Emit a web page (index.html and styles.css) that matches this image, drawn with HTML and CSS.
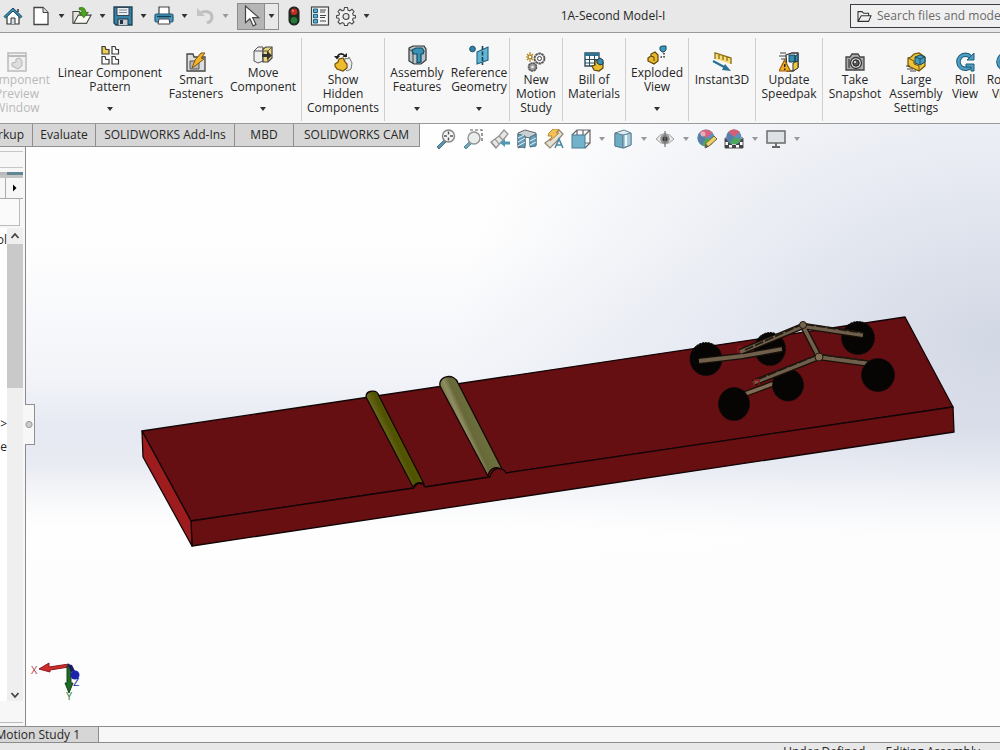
FILE: index.html
```html
<!DOCTYPE html>
<html lang="en">
<head>
<meta charset="utf-8">
<title>1A-Second Model-I</title>
<link rel="stylesheet" href="styles.css">
</head>
<body>
<div class="app">
  <header class="titlebar">
    <div class="quick">
      <button class="tool home" aria-label="Home"><svg viewBox="0 0 20 20"><path d="M4 10v8h12v-8l-6-6z" fill="#fff" stroke="#333" stroke-width="1.2"/><path d="M1 10.500 10 2l9 8.500-1.500 1.500L10 5l-7.500 7z" fill="#3f8fb5" stroke="#174a63"/><path d="M8 18v-6h4v6" fill="#cfdde4" stroke="#333"/><path d="M15 3v3" stroke="#333" stroke-width="1.500"/></svg></button>
      <button class="tool" aria-label="New"><svg viewBox="0 0 20 20"><path d="M3 1.500h9l5 5v12H3z" fill="#fff" stroke="#444" stroke-width="1.300"/><path d="M12 1.500v5h5" fill="#ddd" stroke="#444"/></svg></button><button class="drop" aria-label="New options"><i class="tri"></i></button>
      <button class="tool" aria-label="Open"><svg viewBox="0 0 22 20"><path d="M1 18V5h7l1 3h7v10z" fill="#e8e6dc" stroke="#444" stroke-width="1.200"/><path d="M2 18 7 9h14l-5 9z" fill="#fafaf2" stroke="#444" stroke-width="1.200"/><path d="M8 1c5-1 7 1 7 5h3l-5 6-5-6h3c0-2-1-3-3-3z" fill="#4fa61c" stroke="#26650e" stroke-width=".8"/></svg></button><button class="drop" aria-label="Open options"><i class="tri"></i></button>
      <button class="tool" aria-label="Save"><svg viewBox="0 0 20 20"><path d="M1 1h18v18H3l-2-2z" fill="#3681a5" stroke="#1e4155" stroke-width="1.300"/><path d="M4 1.500h12v8H4z" fill="#e9eef0" stroke="#345"/><path d="M6 4h8M6 6.500h8" stroke="#889"/><path d="M5 19v-6h10v6" fill="#c9cfd2" stroke="#234"/><path d="M7 14h3v4H7z" fill="#234"/></svg></button><button class="drop" aria-label="Save options"><i class="tri"></i></button>
      <button class="tool" aria-label="Print"><svg viewBox="0 0 20 20"><path d="M5 8V1h10v7" fill="#fff" stroke="#444" stroke-width="1.200"/><rect x="1" y="8" width="18" height="8" rx="1.500" fill="#4a9cc1" stroke="#1c556f" stroke-width="1.200"/><path d="M3 10.500h14" stroke="#123c50" stroke-width="1.500"/><path d="M5 13h10l1 5H4z" fill="#fff" stroke="#444"/></svg></button><button class="drop" aria-label="Print options"><i class="tri"></i></button>
      <button class="tool" aria-label="Undo" disabled><svg viewBox="0 0 20 20"><path d="M5 7c6-3 12-1 12 4 0 3-2 5-5 6" fill="none" stroke="#bfbfbf" stroke-width="3"/><path d="M2 2v8h8z" fill="#c4c4c4"/></svg></button><button class="drop dim" aria-label="Undo options"><i class="tri"></i></button>
      <div class="select-box"><button class="pick" aria-label="Select"><svg viewBox="0 0 20 20"><path d="M5 1v15l4-3.500 3 6.500 2.500-1.200-3-6.300H17z" fill="#fff" stroke="#444" stroke-width="1.100"/></svg></button><button class="pickdrop" aria-label="Select options"><i class="tri"></i></button></div>
      <button class="tool wide" aria-label="Rebuild"><svg viewBox="0 0 20 20"><rect x="5" y="1" width="10" height="18" rx="4.500" fill="#1c2a1e" stroke="#222"/><circle cx="10" cy="5.800" r="3.300" fill="#c22a22"/><circle cx="10" cy="14.200" r="3.300" fill="#237a34"/><circle cx="9" cy="4.800" r="1" fill="#e88"/></svg></button>
      <button class="tool wide" aria-label="File properties"><svg viewBox="0 0 20 20"><rect x="1.500" y="1" width="17" height="18" fill="#f4f4f4" stroke="#444" stroke-width="1.200"/><path d="M3.500 3h4v3.500h-4zM3.500 8.300h4v3.500h-4zM3.500 13.600h4V17h-4z" fill="#5eb0d0" stroke="#1c5c7b"/><path d="M10 4h6M10 6h5M10 9.500h6M10 11.500h5M10 15h6" stroke="#444"/></svg></button>
      <button class="tool wide" aria-label="Options"><svg viewBox="0 0 20 20"><path d="m8.500 1.500h3l.5 2.500 1.800.8L16 3.300 18 5.500l-1.400 2 .7 1.700 2.200.4v2.200l-2.300.5-.7 1.700L18 16l-2 2-2.200-1.400-1.800.8-.5 2.100h-3L8 17.400l-1.800-.8L4 18l-2-2 1.400-2-.7-1.700L.5 11.800V9.600l2.300-.4.7-1.700-1.400-2L4 3.300l2.200 1.500L8 4z" fill="#f2f2f2" stroke="#4a4a4a" stroke-width="1.100"/><circle cx="10" cy="10.500" r="3" fill="#e6e6e6" stroke="#4a4a4a" stroke-width="1.200"/></svg></button><button class="drop" aria-label="Options menu"><i class="tri"></i></button>
    </div>
    <h1 class="title">1A-Second Model-I</h1>
    <label class="search"><svg viewBox="0 0 18 16"><path d="M1 14V2h5l2 2h6v3M1 14 5 7h12l-3 7z" fill="none" stroke="#333" stroke-width="1.300"/></svg><input type="text" placeholder="Search files and models" aria-label="Search files and models"></label>
  </header>

  <nav class="ribbon" aria-label="Assembly commands">
    <div class="group first">
      <button class="cmd low w72" disabled><svg viewBox="0 0 20 20"><rect x="1" y="1" width="18" height="18" fill="#f2f2f2" stroke="#bbb" stroke-width="1.500"/><path d="M1 4h18" stroke="#bbb" stroke-width="2"/><path d="M5 11l4-1V7l4-1 2 3v5l-4 3-6-3z" fill="#ddd" stroke="#b5b5b5"/></svg><span>Component<br>Preview<br>Window</span></button>
      <button class="cmd w114"><svg viewBox="0 0 20 20"><g fill="#fff" stroke="#3a3a3a" stroke-width="1.200"><path d="M2 1.500h3l1 3h3V9H2z" fill="#eed04c"/><path d="M12 1.500h3l1 3h2.500V9H12zM2 11.500h3l1 3h3V19H2zM12 11.500h3l1 3h2.500V19H12z"/></g></svg><span>Linear Component<br>Pattern</span><i class="tri"></i></button>
      <button class="cmd low w58"><svg viewBox="0 0 20 20"><path d="M1 19V2h6l1 3h11v14z" fill="#ddd" stroke="#444" stroke-width="1.300"/><path d="M4 9h9v8H4z" fill="#b8b8b8" stroke="#555"/><path d="M6 16 9 8l6-7h4l-4 5 3 1-9 7z" fill="#f1b329" stroke="#805313"/></svg><span>Smart<br>Fasteners</span></button>
      <button class="cmd w76"><svg viewBox="0 0 20 20"><path d="M1 6 5 2h5v14l-5 2-4-2z" fill="#eee" stroke="#555"/><path d="M10 4l3-2h6v11l-4 4h-5z" fill="#ecd67a" stroke="#444" stroke-width="1.200"/><path d="M1 6h14l4-4M15 6v11" fill="none" stroke="#555"/><path d="M9 9h5V6l5 4.500-5 4.500v-3H9z" fill="#333"/></svg><span>Move<br>Component</span><i class="tri"></i></button>
    </div>
    <div class="group">
      <button class="cmd low w82"><svg viewBox="0 0 20 20"><path d="M12 6l3 1 1-2 3 6-1 6-4 2-3-3z" fill="#eee" stroke="#777"/><path d="M2 12l3-2 1-3 4-1 2 4 2 2v4l-4 3-6-2-2-3z" fill="#edbc2c" stroke="#72500c" stroke-width="1.200"/><path d="M4 5c2-4 6-4 8-1" fill="none" stroke="#222" stroke-width="1.600"/><path d="m1 4 3 3.500L7 4zM9.500 5H14V1z" fill="#222"/></svg><span>Show<br>Hidden<br>Components</span></button>
    </div>
    <div class="group">
      <button class="cmd w64"><svg viewBox="0 0 20 20"><path d="M2 3 6 1h11l2 3v11l-5 4H7l-5-3z" fill="#b8c4c9" stroke="#333" stroke-width="1.200"/><path d="M5 5l4-2h6l2 3-1 3h-2v8l-4 1V9H6z" fill="#3793b7" stroke="#174b63" stroke-width="1.200"/><path d="M2 4l4 3v12" stroke="#444" fill="none"/></svg><span>Assembly<br>Features</span><i class="tri"></i></button>
      <button class="cmd w60"><svg viewBox="0 0 20 20"><path d="M8 7l11-5v13L8 19z" fill="#65b5d2" stroke="#1d6384" stroke-width="1.100"/><path d="M13.500 1v19" stroke="#163f54" stroke-width="1.600" stroke-dasharray="4 1.500"/><circle cx="3.500" cy="4" r="2.800" fill="#3584a7" stroke="#174b63"/></svg><span>Reference<br>Geometry</span><i class="tri"></i></button>
    </div>
    <div class="group">
      <button class="cmd low w52"><svg viewBox="0 0 20 20"><circle cx="13.500" cy="6.500" r="5" fill="#eee" stroke="#555" stroke-width="1.800" stroke-dasharray="2.600 .5"/><circle cx="13.500" cy="6.500" r="2" fill="#fff" stroke="#444"/><circle cx="6.500" cy="15" r="4" fill="#999" stroke="#555" stroke-width="1.600" stroke-dasharray="2.200 .5"/><circle cx="6.500" cy="15" r="1.300" fill="#eee"/><circle cx="4" cy="5" r="2" fill="none" stroke="#b38624" stroke-width="1.500"/><path d="M4 0v2M4 8v2M0 5h1M1 2l1 1M6 7l1 1M1 8l1-1M6 3l1-1" stroke="#b38624" stroke-width="1.200"/></svg><span>New<br>Motion<br>Study</span></button>
    </div>
    <div class="group">
      <button class="cmd low w62"><svg viewBox="0 0 20 20"><path d="M1 1h14v13H1z" fill="#fff" stroke="#2a4f63" stroke-width="1.400"/><path d="M1 1h14v3H1z" fill="#2f7493"/><path d="M1 7.500h14M1 11h14M5.500 3v11M10.500 3v11" stroke="#2a4f63"/><path d="M8 14l3-1V9l4-2 4 3v6l-4 3-5-1z" fill="#ecbc2f" stroke="#604507" stroke-width="1.200"/><path d="m13 8 3-2 3 2v4l-3 1-3-2z" fill="#3a8db0" stroke="#173f53"/></svg><span>Bill of<br>Materials</span></button>
    </div>
    <div class="group">
      <button class="cmd w62"><svg viewBox="0 0 20 20"><path d="M1 13l3-2V9l4-2 3 3v6l-4 3-6-3z" fill="#e9b92b" stroke="#60450a" stroke-width="1.200"/><path d="M4 11l3 1v4" fill="none" stroke="#60450a"/><path d="M13 2l2-1h4v4l-2 2h-2l-2-2z" fill="#3c96bd" stroke="#174b63"/><path d="M17 8v4h-5" fill="none" stroke="#333" stroke-dasharray="1.500 1.500" stroke-width="1.500"/></svg><span>Exploded<br>View</span><i class="tri"></i></button>
    </div>
    <div class="group">
      <button class="cmd low w66"><svg viewBox="0 0 20 20"><path d="m4 1 15 5v6L3 7z" fill="#f7dc7b"/><path d="M3 7V1l16 5v6M7 3v4M11 4v4M15 5v4" fill="none" stroke="#8b6c10" stroke-width="1.300"/><path d="m1 9 13 7" stroke="#2c7090" stroke-width="2.200"/><path d="m13 12 6 7-9-1z" fill="#2c7090"/></svg><span>Instant3D</span></button>
    </div>
    <div class="group">
      <button class="cmd low w66"><svg viewBox="0 0 20 20"><path d="M7 3 13 1h6v14l-5 4H8z" fill="#fff" stroke="#333" stroke-width="1.300"/><path d="M10 3h6v6l-3 1h-3zM16 4l3-2v7l-3 1z" fill="#398bad" stroke="#164359"/><path d="M14 11l5-2v7l-5 3z" fill="#efc83c" stroke="#333"/><path d="M1 1h6M0 4h7M2 7h5" stroke="#444"/><path d="m5.500 8 6 11H0z" fill="#f2ad23" stroke="#9b5e0c" stroke-width="1.200"/><path d="M5.700 12v3M5.700 16.500V18" stroke="#222" stroke-width="1.500"/></svg><span>Update<br>Speedpak</span></button>
    </div>
    <div class="group last">
      <button class="cmd low w64"><svg viewBox="0 0 20 20"><path d="M1 5h4l2-3h6l2 3h4v13H1z" fill="#aaa" stroke="#444" stroke-width="1.300"/><path d="M3 7h2v9H3z" fill="#666"/><circle cx="11" cy="11" r="5.500" fill="#ddd" stroke="#333" stroke-width="1.300"/><circle cx="11" cy="11" r="3.200" fill="#555" stroke="#222"/><circle cx="10" cy="10" r="1" fill="#fff"/></svg><span>Take<br>Snapshot</span></button>
      <button class="cmd low w58"><svg viewBox="0 0 20 20"><path d="M2 6l3-1 3-3 5-1 6 4v9l-6 5-11-5z" fill="#edc339" stroke="#6d5109" stroke-width="1.200"/><path d="M2 6l6 3v3l5 2v5" fill="none" stroke="#6d5109"/><path d="m9 5 5-2 5 2v5l-5 3-5-2z" fill="#469bbe" stroke="#184d65"/><path d="m9 5 5 2v6M14 7l5-2" stroke="#184d65" fill="none"/><path d="M0 14h4M1 17h6M4 19h6" stroke="#444"/></svg><span>Large<br>Assembly<br>Settings</span></button>
      <button class="cmd low w40"><svg viewBox="0 0 20 20"><path d="M15.500 5A7 7 0 1 0 16 14" fill="none" stroke="#1e5877" stroke-width="4.500"/><path d="M15.500 5A7 7 0 1 0 16 14" fill="none" stroke="#4a9dc3" stroke-width="2.600"/><path d="M19 1v7h-7zM11 12h8v7h-3v-4h-5z" fill="#4a9dc3" stroke="#1e5877"/></svg><span>Roll<br>View</span></button>
      <button class="cmd low w40"><svg viewBox="0 0 20 20"><path d="M15.500 5A7 7 0 1 0 16 14" fill="none" stroke="#1e5877" stroke-width="4.500"/><path d="M15.500 5A7 7 0 1 0 16 14" fill="none" stroke="#4a9dc3" stroke-width="2.600"/></svg><span>Rotate<br>View</span></button>
    </div>
  </nav>

  <main class="work">
    <div class="tabs" role="tablist">
      <button role="tab" class="cut"><span>Markup</span></button><button role="tab" class="t62">Evaluate</button><button role="tab" class="t139">SOLIDWORKS Add-Ins</button><button role="tab" class="t59">MBD</button><button role="tab" class="t126">SOLIDWORKS CAM</button>
    </div>

    <aside class="side">
      <div class="strip"></div>
      <div class="band"></div>
      <div class="paging"><button aria-label="Next tab"><i class="tri right"></i></button></div>
      <div class="filter"></div>
      <div class="tree">
        <div class="labels"><span class="n1">Symbol</span><span class="n2">&gt;</span><span class="n3">Style</span></div>
        <div class="scroll">
          <svg viewBox="0 0 10 8"><path d="m1.500 6 3.500-4 3.500 4" fill="none" stroke="#444" stroke-width="1.800"/></svg>
          <div class="thumb"></div>
          <svg class="down" viewBox="0 0 10 8"><path d="m1.500 2 3.500 4 3.500-4" fill="none" stroke="#444" stroke-width="1.800"/></svg>
        </div>
      </div>
      <div class="foot"></div>
      <button class="handle" aria-label="Collapse panel"></button>
    </aside>

    <section class="view" aria-label="Graphics area">
      <svg class="scene" viewBox="26 124 974 602" preserveAspectRatio="xMidYMid meet">
        <defs>
          <linearGradient id="bar" gradientUnits="userSpaceOnUse" x1="462" y1="432" x2="480" y2="424"><stop offset="0" stop-color="#817f50"/><stop offset=".2" stop-color="#8f8d62"/><stop offset=".45" stop-color="#68693a"/><stop offset="1" stop-color="#6c6f3d"/></linearGradient>
          <linearGradient id="bar2" gradientUnits="userSpaceOnUse" x1="388" y1="440" x2="401" y2="434"><stop offset="0" stop-color="#66661a"/><stop offset=".5" stop-color="#4f5200"/><stop offset="1" stop-color="#565900"/></linearGradient>
        </defs>
        <g stroke="#120506" stroke-width="1.300" stroke-linejoin="round">
          <path d="m142 431 763-114 48 90-447 66c-3-6-13-7-16 4l-65 10c-3-5-8-5-11 1l-223 33z" fill="#650f12"/>
          <path d="m191 521 223-33c3-6 8-6 11-1l65-10c3-11 13-10 16-4l447-66 1 25-762 114z" fill="#680f12"/>
          <path d="m142 431 49 90 1 25-49-89z" fill="#9e1c1e"/>
          <path d="M366 397c0-7 11-8 13-1l45 88c-4-3-9-1-11 3z" fill="url(#bar2)"/>
          <path d="M440 386c-2-11 15-13 18-3l44 86c-8-4-13 1-14 7z" fill="url(#bar)"/>
        </g>
        <g fill="#060504" stroke="#100c0a" stroke-dasharray="2 1">
          <ellipse cx="706" cy="359" rx="16" ry="16.500"/><ellipse cx="770" cy="349" rx="15.500" ry="16.500"/><ellipse cx="858" cy="338" rx="16.500" ry="16.500"/>
        </g>
        <g stroke-linejoin="round" fill="none">
          <path d="M734 398 775 383" stroke="#171009" stroke-width="6"/><path d="M734 398 775 383" stroke="#806c55" stroke-width="3.500"/>
        </g>
        <g fill="#060504" stroke="#100c0a" stroke-dasharray="2 1">
          <ellipse cx="734" cy="404" rx="15.500" ry="16.500"/><ellipse cx="788" cy="385" rx="15.500" ry="16"/>
        </g>
        <g stroke-linejoin="round" fill="none">
          <path d="m699 361 44-5 39-7M740 352l63-26 60 9M803 326l16 31 52 7M819 357l-66 26" stroke="#171009" stroke-width="6.500"/>
          <path d="m699 361 44-5 39-7M740 352l63-26 60 9M803 326l16 31 52 7M819 357l-66 26" stroke="#6f5f4b" stroke-width="3.800"/>
          <path d="m745 350 58-26 60 9M823 355l46 6M817 355l-58 24" stroke="#211910" stroke-width="1.600" stroke-dasharray="9 2"/>
          <path d="M738 353v-6h4M754 386v-6h5v5" stroke="#8f1519" stroke-width="1.500"/>
        </g>
        <circle cx="803" cy="325" r="3.500" fill="#75644f" stroke="#20160c"/><circle cx="819" cy="357" r="4" fill="#806d56" stroke="#20160c"/>
        <ellipse cx="878" cy="375" rx="16.500" ry="16.500" fill="#060504" stroke="#100c0a" stroke-dasharray="2 1"/>
        <path d="M69 664 49 667v-4l-10 6 11 3v-2l19-3z" fill="#cf2c2d" stroke="#8d1a1c"/>
        <path d="M67 666v17h-2l4 10 4-10h-2v-17z" fill="#1e6a27" stroke="#114316"/>
        <path d="m67 664 5 1 3 6-4 1z" fill="#1c1c60"/><circle cx="75" cy="675" r="4.500" fill="#1d22ae"/>
        <g class="axis"><text x="31" y="674" fill="#b84547">X</text><text x="66" y="700" fill="#2f7c3b">Y</text><text x="73" y="686" fill="#2328a8">Z</text></g>
      </svg>
      <div class="hud">
        <button aria-label="Zoom to fit"><svg viewBox="0 0 20 20"><path d="m1 18 7-7 2 2-7 7z" fill="#478aa9" stroke="#3c6478"/><circle cx="12.500" cy="7" r="6" fill="#f4f4f4" stroke="#777" stroke-width="1.400"/><path d="M12.500 2.500v3M12.500 8.500v3M8 7h3M14 7h3" stroke="#444" stroke-width="1.500"/></svg></button>
        <button aria-label="Zoom to area"><svg viewBox="0 0 20 20"><path d="M7 1h12v13" fill="none" stroke="#444" stroke-width="1.200" stroke-dasharray="3 2"/><path d="m1 18 6-6 2 2-6 6z" fill="#5aa2bd" stroke="#4c7789"/><circle cx="11" cy="9" r="6" fill="#e9ecec" stroke="#888" stroke-width="1.400"/></svg></button>
        <button aria-label="Previous view"><svg viewBox="0 0 20 20"><path d="m1 13 8-6 5-6 4 4-5 6-7 8z" fill="#e4e4e4" stroke="#888" stroke-width="1.200"/><path d="m9 7 4 4M5 10l4 5M1 13l5 6" stroke="#888" stroke-width="1.200"/><path d="m10 14 5-4v2.500h5v3h-5V18z" fill="#3e8fae"/></svg></button>
        <button aria-label="Section view"><svg viewBox="0 0 20 20"><path d="M1 4 8 1l11 3v12h-6V9l-5-1v9l-7 2z" fill="#c4ccd0" stroke="#555"/><path d="m1 5 7 2v12l-7-2zM13 8l6-3v12l-6 1z" fill="#5395b1" stroke="#2f647b"/><path d="m1 9 6-3M1 13l7-4M1 17l7-4M13 12l6-3M13 16l6-3" stroke="#e6f1f5"/></svg></button>
        <button aria-label="Dynamic annotation views"><svg viewBox="0 0 20 20"><path d="m1 14 8-6 6-7 4 4-6 7-7 7z" fill="#e1ddd4" stroke="#8a7a63" stroke-width="1.200"/><path d="m5 4 4-4h6l-3 4h3l-9 8 2-5H4z" fill="#f1bd42" stroke="#b47b20"/><path d="m11 19 4-9 4 9M12 16h6" fill="none" stroke="#347d9b" stroke-width="1.600"/></svg></button>
        <button aria-label="View orientation"><svg viewBox="0 0 20 20"><path d="m1 6 5-5h13v13l-5 5M6 1v5M14 6l5-5M14 14h5M12 1v5" fill="none" stroke="#555" stroke-width="1.200"/><rect x="1" y="6" width="13" height="13" fill="#64aac5" stroke="#366f89"/></svg></button>
        <i class="tri"></i>
        <button aria-label="Display style"><svg viewBox="0 0 20 20"><path d="M2 4 11 1l7 3v12l-7 3-9-2z" fill="#dceaf0" stroke="#527486"/><path d="m2 4 8 2v13l-8-2z" fill="#5fa4be" stroke="#477083"/><path d="m10 6 8-2v12l-8 3z" fill="#9dc6d6" stroke="#527486"/><path d="M13 6v11" stroke="#edf7fa" stroke-width="2"/></svg></button>
        <i class="tri"></i>
        <button aria-label="Hide or show items"><svg viewBox="0 0 20 20"><path d="M1 10q9-11 18 0-9 10-18 0z" fill="#e7e7e7" stroke="#999"/><circle cx="10" cy="10" r="4.800" fill="#888"/><circle cx="10" cy="10" r="2.500" fill="#222"/><path d="M10 2v16" stroke="#666" stroke-width="1.200"/></svg></button>
        <i class="tri"></i>
        <button aria-label="Edit appearance"><svg viewBox="0 0 20 20"><circle cx="9" cy="9" r="8.500" fill="#4b87bd"/><path d="M9 9 2 4Q9-3 16 4z" fill="#d3556f"/><path d="m9 9-7-5Q-2 11 5 16.500z" fill="#45749d"/><path d="m9 9-4 7.500Q14 20 17 11z" fill="#39a047"/><circle cx="6" cy="5" r="2.500" fill="#f4c8d3" opacity=".7"/><path d="m8 19 1-5 8-7 3 3-8 7z" fill="#eccb58" stroke="#6d582c"/><path d="m8 19 1-4 2.500 2.500z" fill="#444"/></svg></button>
        <button aria-label="Apply scene"><svg viewBox="0 0 20 20"><path d="M1 9h18v10H1z" fill="#fff" stroke="#444"/><path d="M1 10h4v3H1zM15 10h4v3h-4zM4 13h4v3H4zM12 13h4v3h-4zM1 16h4v3H1zM8 16h4v3H8zM15 16h4v3h-4z" fill="#333"/><circle cx="10" cy="8" r="7.500" fill="#4b87bd"/><path d="m10 8-6-5q6-5.500 12 0z" fill="#cf5268"/><path d="m10 8-4 6q7 4 11-4z" fill="#39a047"/><path d="M10 8 4 3Q0 9 6 14z" fill="#4773a5"/></svg></button>
        <i class="tri"></i>
        <button aria-label="View settings"><svg viewBox="0 0 20 20"><rect x="1" y="2" width="18" height="12" fill="#dce1e6" stroke="#666" stroke-width="1.600"/><path d="M10 14v4M6 18h8" stroke="#555" stroke-width="1.800"/></svg></button>
        <i class="tri"></i>
      </div>
    </section>
  </main>

  <div class="sheets"><button><span>Motion Study 1</span></button></div>
  <footer class="status"><span>Under Defined</span><span>Editing Assembly</span></footer>
</div>
</body>
</html>
```
FILE: styles.css
```css
* { box-sizing: border-box; }
body {
  margin: 0;
  font: 12px/14px "Open Sans", "Noto Sans", sans-serif;
  color: #262626;
}
button {
  font: inherit;
  color: inherit;
  padding: 0;
  border: 0;
  background: none;
}
svg { display: block; }
.app {
  display: flex;
  flex-direction: column;
  height: 100vh;
  overflow: hidden;
  background: #f7f7f7;
}
.tri {
  display: block;
  width: 6px;
  height: 4px;
  background: #333;
  clip-path: polygon(0 0, 100% 0, 50% 100%);
}
.tri.right {
  width: 4px;
  height: 8px;
  background: #000;
  clip-path: polygon(0 0, 100% 50%, 0 100%);
}

/* Title bar */
.titlebar {
  display: flex;
  align-items: center;
  flex: none;
  height: 33px;
  background: #e8e8e8;
  border-bottom: 1px solid #9a9a9a;
}
.quick { display: flex; align-items: center; }
.tool, .wide { width: 22px; }
.tool svg { width: 20px; height: 20px; margin: 0 auto; }
.tool.home { margin: 0 6px 0 2px; }
.tool.wide { margin-left: 4px; }
.drop { display: flex; justify-content: center; width: 19px; }
.dim .tri { background: #999; }
.select-box {
  display: flex;
  width: 42px;
  height: 27px;
  margin-left: 2px;
  border: 1px solid #8c8c8c;
}
.pick { width: 27px; background: #b5b5b5; border-right: 1px solid #8c8c8c; }
.pick svg { width: 22px; height: 22px; margin: 0 auto; }
.pickdrop { display: flex; flex: 1; align-items: center; justify-content: center; }
.title {
  flex: 1;
  margin: 0;
  text-align: center;
  font-size: 12px;
  font-weight: 400;
}
.search {
  display: flex;
  align-items: center;
  gap: 5px;
  width: 151px;
  height: 24px;
  margin-right: -1px;
  padding-left: 6px;
  border: 1px solid #3c3c44;
  background: #f0f0f0;
}
.search svg { flex: none; width: 15px; height: 13px; }
.search input {
  flex: 1;
  min-width: 0;
  padding: 0;
  border: 0;
  outline: 0;
  background: none;
  font: inherit;
}
.search input::placeholder { color: #6a6a6a; opacity: 1; }

/* Ribbon */
.ribbon {
  display: flex;
  flex: none;
  height: 91px;
  padding: 5px 0 2px;
  border-bottom: 1px solid #999;
  overflow: hidden;
}
.group { display: flex; flex: none; border-right: 1px solid #cfcfcf; }
.group.first { margin-left: -19px; }
.group.last { border: 0; }
.cmd {
  display: flex;
  flex-direction: column;
  align-items: center;
  flex: none;
  padding: 7px 0 10px;
  white-space: nowrap;
}
.cmd svg { flex: none; width: 20px; height: 20px; margin-bottom: 1px; }
.cmd.low { padding-top: 14px; }
.cmd .tri { margin-top: auto; }
.cmd:disabled { color: #b9b9b9; }
.w40 { width: 40px; }
.w52 { width: 52px; }
.w56 { width: 56px; }
.w58 { width: 58px; }
.w60 { width: 60px; }
.w62 { width: 62px; }
.w64 { width: 64px; }
.w66 { width: 66px; }
.w72 { width: 72px; }
.w76 { width: 76px; }
.w82 { width: 82px; }
.w114 { width: 114px; }

/* Work area: the tabs share the first row with the graphics area */
.work {
  display: grid;
  grid-template: 23px minmax(0, 1fr) / 26px minmax(0, 1fr);
  flex: 1;
  min-height: 0;
}
.tabs {
  grid-area: 1 / 1 / 2 / 3;
  z-index: 1;
  justify-self: start;
  display: flex;
  border-bottom: 1px solid #8f8f8f;
  background: #d6d6d6;
}
.tabs button { border-right: 1px solid #8f8f8f; white-space: nowrap; }
.tabs .cut { display: flex; align-items: center; justify-content: flex-end; width: 33px; padding-right: 8px; overflow: hidden; }
.t59 { width: 59px; }
.t62 { width: 63px; }
.t126 { width: 126px; }
.t139 { width: 139px; }

.side {
  grid-area: 2 / 1 / 3 / 2;
  z-index: 1;
  position: relative;
  display: flex;
  flex-direction: column;
  padding-right: 2px;
  border-right: 1px solid #8a8a8a;
  background: #f7f7f7;
}
.strip { flex: none; height: 17px; margin-top: 4px; border: solid #c6c6c6; border-width: 1px 0; }
.band { flex: none; height: 6px; margin-top: 4px; background: linear-gradient(90deg, #b9b9b9 30%, #5f8795 30%); border-bottom: 3px solid #c4c4c4; }
.paging {
  display: flex;
  justify-content: flex-end;
  flex: none;
  height: 21px;
  border-bottom: 1px solid #aaa;
}
.paging button {
  display: flex;
  align-items: center;
  justify-content: center;
  width: 18px;
  border-left: 1px solid #aaa;
}
.filter { flex: none; width: 20px; height: 27px; border: solid #bbb; border-width: 0 1px 1px 0; background: #fafafa; }
.tree { display: flex; flex: 1; min-height: 0; margin-top: 2px; }
.labels {
  display: flex;
  flex-direction: column;
  align-items: flex-end;
  width: 7px;
  overflow: hidden;
  background: #fff;
}
.n1 { margin-top: 5px; }
.n2 { margin-top: 170px; }
.n3 { margin-top: 9px; }
.scroll {
  display: flex;
  flex-direction: column;
  align-items: center;
  flex: 1;
  padding-top: 4px;
  background: #efefef;
}
.scroll svg { flex: none; width: 10px; height: 8px; }
.scroll .down { margin: auto 0 2px; }
.thumb { flex: none; width: 100%; height: 144px; margin-top: 4px; background: #c9c9c9; }
.foot { flex: none; height: 22px; border-bottom: 1px solid #bbb; margin-bottom: 3px; }
.handle {
  position: absolute;
  left: 25px;
  top: 257px;
  width: 10px;
  height: 41px;
  border: 1px solid #8f8f8f;
  border-left: 0;
  background: radial-gradient(circle at 4px 50%, #ccc 2px, #999 3px, #f7f7f7 4px);
}

.view {
  grid-area: 1 / 2 / 3 / 3;
  display: grid;
  grid-template: minmax(0, 1fr) / minmax(0, 1fr);
  background:
    linear-gradient(180deg, rgba(255, 255, 255, 0) 50%, rgba(255, 255, 255, .9) 68%, #fdfdfd 74%),
    radial-gradient(ellipse 56% 62% at 100% 36%, rgba(208, 214, 227, .95), rgba(218, 223, 235, .65) 45%, rgba(255, 255, 255, 0)),
    linear-gradient(180deg, #fefefe 20%, #f2f4f9 42%, #dde1ec 57%, #fdfdfd 70%);
}
.scene { grid-area: 1 / 1; width: 100%; height: 100%; }
.axis { font-size: 11px; }
.hud {
  grid-area: 1 / 1;
  align-self: start;
  display: flex;
  align-items: center;
  gap: 5px;
  padding: 5px 0 0 409px;
}
.hud button { width: 22px; }
.hud svg { width: 20px; height: 20px; margin: 0 auto; opacity: .9; }
.hud .tri { margin: 0 2px; background: #999; }

/* Bottom bars */
.sheets {
  display: flex;
  flex: none;
  height: 17px;
  border: solid #8c8c8c;
  border-width: 1px 0;
}
.sheets button {
  display: flex;
  justify-content: flex-end;
  align-items: center;
  width: 99px;
  padding-right: 18px;
  border-right: 1px solid #8c8c8c;
  background: #d6d6d6;
  white-space: nowrap;
  overflow: hidden;
}
.status {
  display: flex;
  justify-content: flex-end;
  gap: 20px;
  flex: none;
  height: 7px;
  padding: 2px 20px 0 0;
  background: #e8e8e8;
  overflow: hidden;
}
```
